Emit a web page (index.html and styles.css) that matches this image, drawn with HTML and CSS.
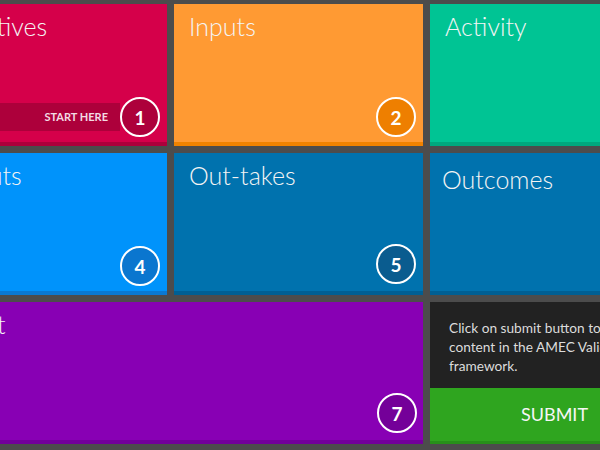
FILE: index.html
```html
<!DOCTYPE html>
<html lang="en">
<head>
    <meta charset="UTF-8">
    <meta name="viewport" content="width=device-width, initial-scale=1.0">
    <title>AMEC Framework</title>
    <link rel="stylesheet" href="styles.css">
</head>
<body>
    <div class="board">
        <div class="tile objectives">
            <h2 class="title">Objectives</h2>
            <div class="footer">
                <div class="start">START HERE</div>
                <span class="step">1</span>
            </div>
        </div>
        <div class="tile inputs">
            <h2 class="title">Inputs</h2>
            <div class="footer">
                <span class="step">2</span>
            </div>
        </div>
        <div class="tile activity">
            <h2 class="title">Activity</h2>
            <div class="footer">
                <span class="step">3</span>
            </div>
        </div>
        <div class="tile outputs">
            <h2 class="title">Outputs</h2>
            <div class="footer">
                <span class="step">4</span>
            </div>
        </div>
        <div class="tile outtakes">
            <h2 class="title">Out-takes</h2>
            <div class="footer">
                <span class="step">5</span>
            </div>
        </div>
        <div class="tile outcomes">
            <h2 class="title title-low">Outcomes</h2>
            <div class="footer">
                <span class="step">6</span>
            </div>
        </div>
        <div class="tile impact">
            <h2 class="title">Impact</h2>
            <div class="footer">
                <span class="step">7</span>
            </div>
        </div>
        <div class="panel">
            <p class="note">Click on submit button to save content in the AMEC Validation framework.</p>
            <button class="submit">SUBMIT</button>
        </div>
    </div>
</body>
</html>
```

FILE: styles.css
```css
html, body {
    margin: 0;
    overflow: hidden;
}

body {
    background-color: #4c4c4c;
    font-family: "Lato", "Liberation Sans", sans-serif;
    color: #ffffff;
}

.board {
    display: grid;
    grid-template-columns: repeat(3, 249px);
    grid-auto-rows: 142px;
    gap: 7px;
    padding-top: 4px;
    margin-left: -82px;
    width: 761px;
}

.tile {
    display: flex;
    flex-direction: column;
    box-sizing: border-box;
    border-bottom: 4px solid;
}

.title {
    margin: 0;
    padding: 7px 15px 0;
    font-size: 25px;
    font-weight: 300;
    line-height: 31px;
    color: #f4f4f4;
}

.title-low {
    padding: 11px 12px 0;
}

.footer {
    display: flex;
    align-items: center;
    margin-top: auto;
    margin-bottom: 5px;
    padding-right: 7px;
}

.start {
    flex: 1;
    height: 28px;
    line-height: 28px;
    text-align: right;
    padding-right: 12px;
    font-size: 11px;
    font-weight: 700;
    color: #f3dbe3;
    background-color: #ad003b;
}

.step {
    margin-left: auto;
    width: 36px;
    height: 36px;
    border: 2px solid #ffffff;
    border-radius: 50%;
    display: flex;
    align-items: center;
    justify-content: center;
    font-size: 19px;
    font-weight: 700;
}

.objectives { background-color: #d5004a; border-color: #ad003b; }
.objectives .step { background-color: #ad003b; }

.inputs { background-color: #ff9a33; border-color: #f08200; }
.inputs .step { background-color: #ee7f00; }

.activity { background-color: #00c494; border-color: #00a87e; }
.activity .step { background-color: #00a87e; }

.outputs { background-color: #0093fb; border-color: #0a79d2; }
.outputs .step { background-color: #0a76cf; }

.outtakes, .outcomes { background-color: #0072ae; border-color: #005f93; }
.outtakes .footer { margin-bottom: 7px; }
.outtakes .step, .outcomes .step { background-color: #0a5c8f; }

.impact {
    grid-column: span 2;
    background-color: #8800b4;
    border-color: #72009a;
}
.impact .footer { margin-bottom: 7px; padding-right: 6px; }
.impact .step { background-color: #740099; }

.panel {
    display: flex;
    flex-direction: column;
    background-color: #222222;
}

.note {
    flex: 1;
    margin: 0;
    padding: 16px 19px 0;
    font-size: 13.7px;
    line-height: 19px;
    color: #dcdcdc;
}

.submit {
    height: 56px;
    border: none;
    border-bottom: 3px solid #27901a;
    background-color: #2fa51f;
    color: #f6f6f6;
    font-family: "Lato", "Liberation Sans", sans-serif;
    font-size: 18px;
    padding: 0 0 1px;
    cursor: pointer;
}
```
